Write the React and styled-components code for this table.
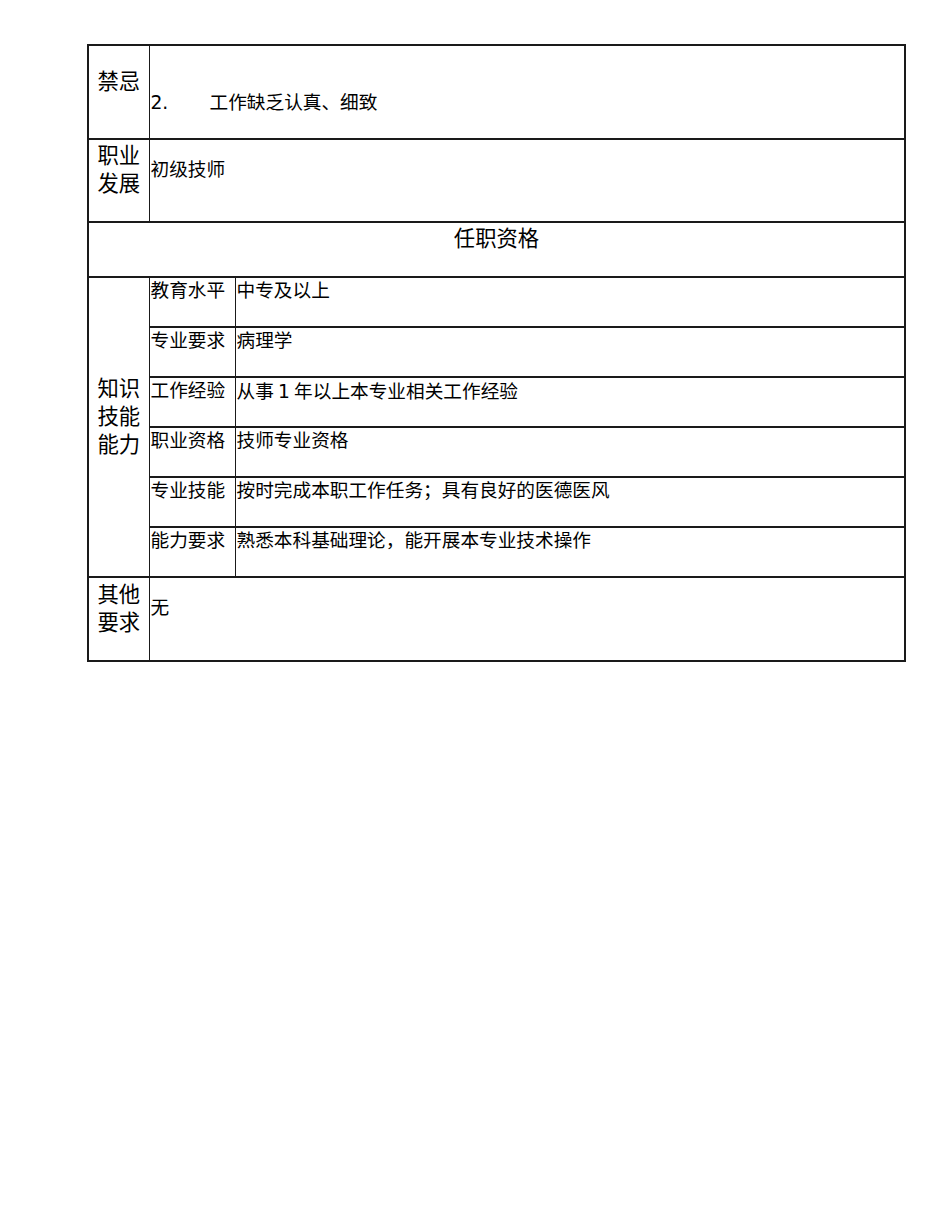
import React from "react";
import styled, { createGlobalStyle } from "styled-components";

const Global = createGlobalStyle`
  html, body { margin: 0; padding: 0; background: #fff; }
  body { font-family: "DejaVu Sans", "Noto Sans CJK SC", sans-serif; color: #000; }
`;

const Page = styled.div`
  width: 950px;
  min-height: 1230px;
  padding: 44px 0 0 87px;
  box-sizing: border-box;
`;

const Table = styled.table`
  width: 819px;
  border-collapse: collapse;
  table-layout: fixed;
  border: 2px solid #1a1a1a;
`;

const Row = styled.tr`
  height: ${(p) => p.$h}px;
`;

const BaseCell = styled.td`
  border-top: 2px solid #1a1a1a;
  border-bottom: 2px solid #1a1a1a;
  border-left: 1px solid #1a1a1a;
  border-right: 1px solid #1a1a1a;
  vertical-align: middle;
  box-sizing: border-box;
`;

const Label = styled(BaseCell)`
  font-size: 21.33px;
  line-height: 28px;
  text-align: center;
  padding: 0 0 21px 0;
`;

const Heading = styled(BaseCell)`
  font-size: 21.33px;
  line-height: 28px;
  text-align: center;
  padding: 0 0 21px 0;
`;

const Content = styled(BaseCell)`
  font-size: 18.67px;
  line-height: 24px;
  text-align: left;
  padding: ${(p) => (p.$low ? "22px 0 0 1px" : "0 0 22px 1px")};
  white-space: nowrap;
`;

const Num = styled.span`
  display: inline-block;
  width: 59px;
`;

const Gap = styled.span`
  font-family: "Noto Sans CJK SC", sans-serif;
`;

const subRows = [
  ["教育水平", "中专及以上"],
  ["专业要求", "病理学"],
  [
    "工作经验",
    <>
      从事<Gap> </Gap>1<Gap> </Gap>年以上本专业相关工作经验
    </>,
  ],
  ["职业资格", "技师专业资格"],
  ["专业技能", "按时完成本职工作任务；具有良好的医德医风"],
  ["能力要求", "熟悉本科基础理论，能开展本专业技术操作"],
];

export default function App() {
  return (
    <Page>
      <Global />
      <Table>
        <colgroup>
          <col style={{ width: "61px" }} />
          <col style={{ width: "86px" }} />
          <col />
        </colgroup>
        <tbody>
          <Row $h={94}>
            <Label>禁忌</Label>
            <Content colSpan={2} $low>
              <Num>2.</Num>工作缺乏认真、细致
            </Content>
          </Row>
          <Row $h={83}>
            <Label>
              职业
              <br />
              发展
            </Label>
            <Content colSpan={2}>初级技师</Content>
          </Row>
          <Row $h={55}>
            <Heading colSpan={3}>任职资格</Heading>
          </Row>
          {subRows.map(([k, v], i) => (
            <Row $h={50} key={k}>
              {i === 0 && (
                <Label rowSpan={6}>
                  知识
                  <br />
                  技能
                  <br />
                  能力
                </Label>
              )}
              <Content>{k}</Content>
              <Content>{v}</Content>
            </Row>
          ))}
          <Row $h={84}>
            <Label>
              其他
              <br />
              要求
            </Label>
            <Content colSpan={2}>无</Content>
          </Row>
        </tbody>
      </Table>
    </Page>
  );
}
